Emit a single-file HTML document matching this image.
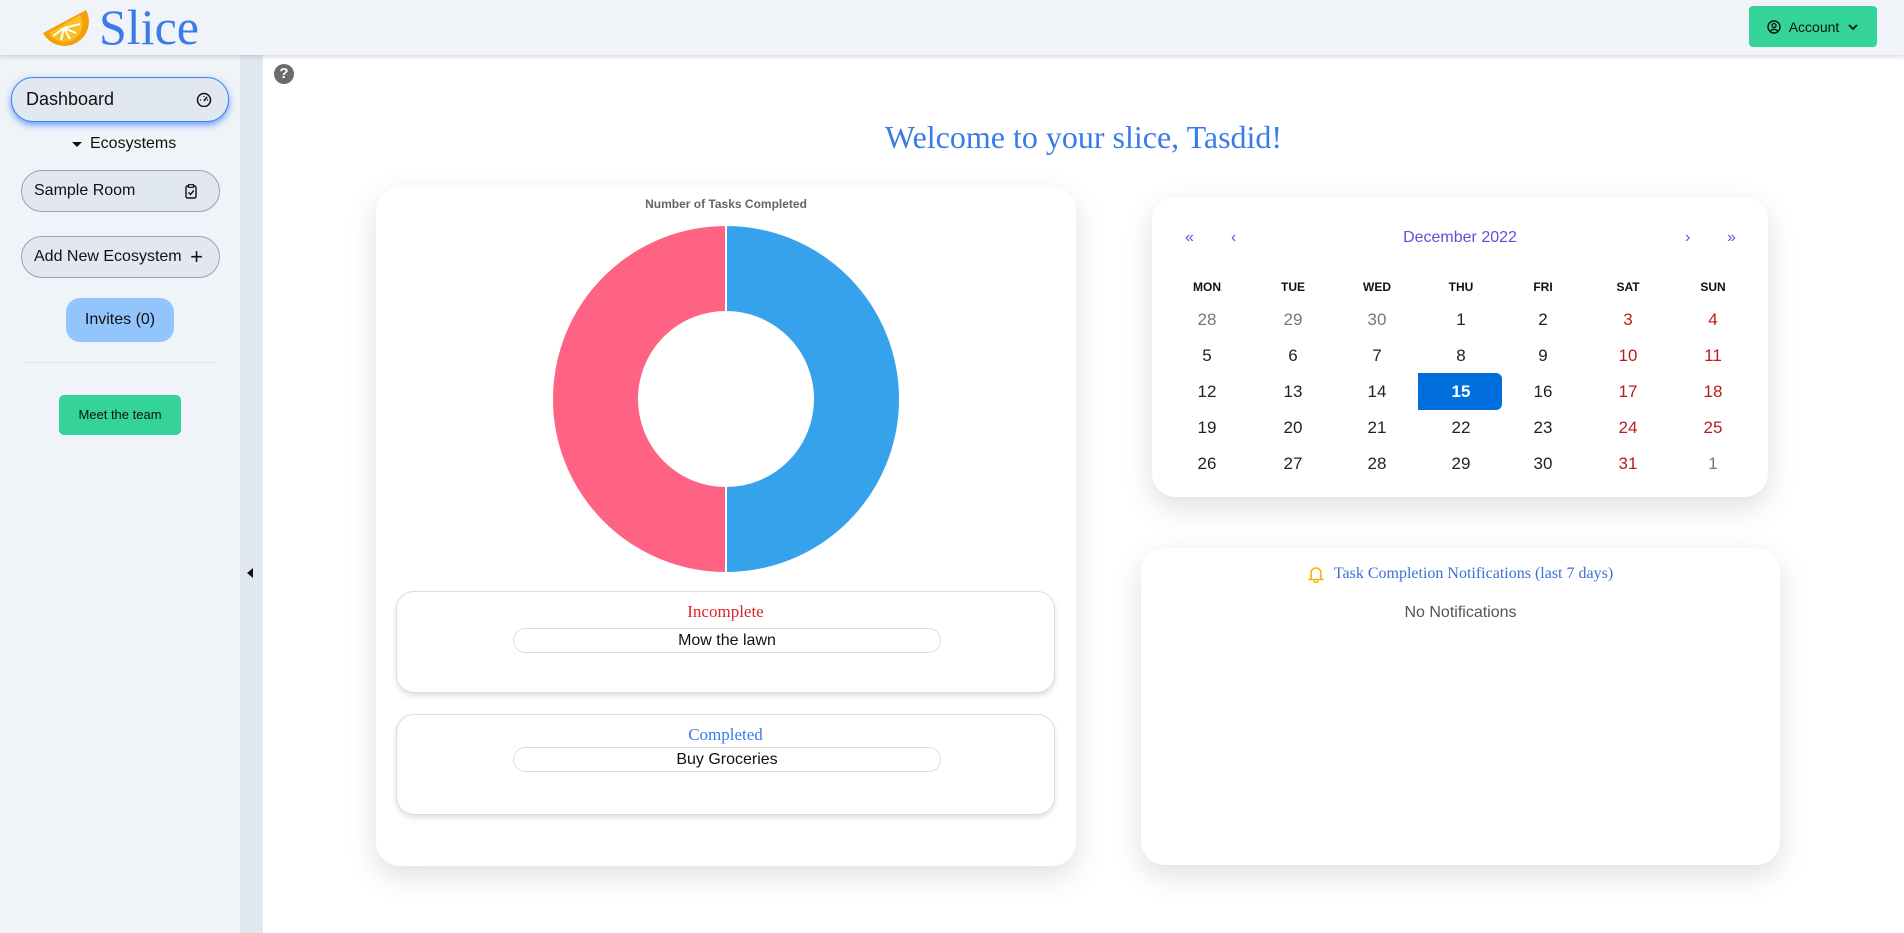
<!DOCTYPE html>
<html><head><meta charset="utf-8"><style>
*{box-sizing:border-box;margin:0;padding:0}
body{width:1904px;height:933px;overflow:hidden;background:#fff;font-family:"Liberation Sans",Arial,sans-serif;position:relative;color:#111}
.abs{position:absolute}
.hdr{left:0;top:0;width:1904px;height:55px;background:#f0f3f8;box-shadow:0 2px 4px rgba(0,0,0,.15);z-index:2}
.serif{font-family:"Liberation Serif",Georgia,serif}
.side{left:0;top:55px;width:240px;height:878px;background:#f0f3f8}
.strip{left:240px;top:55px;width:23px;height:878px;background:#e2e8f0}
.pill{border:1px solid #94a3b8;background:#e2e8f0;border-radius:22px;display:flex;align-items:center;justify-content:space-between;padding:0 14px;font-size:16px;color:#111}
.card{background:#fff;border-radius:24px;box-shadow:0 10px 30px rgba(0,0,0,.13)}
.sub{border-radius:18px;border:1px solid #ddd;background:#fff;box-shadow:0 3px 6px rgba(0,0,0,.12)}
.tp{left:116px;width:428px;height:25px;border:1px solid #ddd;border-radius:13px;text-align:center;font-size:16px;line-height:23px}
.c{position:absolute;width:80px;margin-left:-40px;text-align:center;font-size:17px;color:#222}
.h{font-size:12px;font-weight:bold;color:#111}
.g{color:#777}.r{color:#b91c1c}
</style></head><body>
<div class="abs hdr">
 <svg class="abs" style="left:40px;top:6px" width="50" height="40" viewBox="0 0 50 40"><path d="M3 27 A23 23 0 0 0 46 4 Z" fill="#f59e0b"/><path d="M9 27 A17 17 0 0 0 40 9 Z" fill="#fbbf24"/><path d="M24 22 L13 30 M24 22 L21 34 M24 22 L30 33 M24 22 L36 27 M24 22 L40 18" stroke="#fff" stroke-width="2"/></svg>
 <div class="abs serif" style="left:99px;top:-2px;font-size:50px;color:#3b7be8">Slice</div>
 <div class="abs" style="left:1749px;top:6px;width:128px;height:41px;background:#34d399;border-radius:4px;font-size:14px;display:flex;align-items:center;justify-content:center;gap:8px;color:#111">
  <svg width="14" height="14" viewBox="0 0 14 14"><circle cx="7" cy="7" r="6" fill="none" stroke="#111" stroke-width="1.4"/><circle cx="7" cy="5.5" r="2" fill="none" stroke="#111" stroke-width="1.3"/><path d="M3.5 11 Q7 7.5 10.5 11" fill="none" stroke="#111" stroke-width="1.3"/></svg>Account
  <svg width="12" height="12" viewBox="0 0 12 12"><path d="M2 4 L6 8 L10 4" fill="none" stroke="#111" stroke-width="1.8"/></svg></div>
</div>
<div class="abs side"></div>
<div class="abs strip"></div>
<div class="abs" style="left:247px;top:568px;width:0;height:0;border-top:5px solid transparent;border-bottom:5px solid transparent;border-right:6px solid #111"></div>
<div class="abs pill" style="left:11px;top:77px;width:218px;height:45px;border:1.5px solid #3b82f6;box-shadow:0 3px 7px rgba(59,130,246,.75);padding:0 16px 0 14px;font-size:18px">Dashboard
 <svg width="16" height="15" viewBox="0 0 16 15"><circle cx="8" cy="8" r="6.5" fill="none" stroke="#111" stroke-width="1.5"/><path d="M8 9 L11 5" stroke="#111" stroke-width="1.5"/><path d="M4 8 h1 M8 4 v1 M12 8 h-1" stroke="#111" stroke-width="1.2"/></svg></div>
<div class="abs" style="left:72px;top:135px;font-size:16px;display:flex;align-items:center;gap:8px"><span style="border-left:5px solid transparent;border-right:5px solid transparent;border-top:5px solid #111"></span>Ecosystems</div>
<div class="abs pill" style="left:21px;top:170px;width:199px;height:42px;padding:0 22px 0 12px">Sample Room
 <svg width="12" height="15" viewBox="0 0 12 15"><rect x="1" y="2" width="10" height="12" rx="1.5" fill="none" stroke="#111" stroke-width="1.4"/><rect x="3.5" y="0.7" width="5" height="2.6" fill="#fff" stroke="#111" stroke-width="1.2"/><path d="M3.5 8.5 L5.5 10.5 L8.8 6.5" fill="none" stroke="#111" stroke-width="1.4"/></svg></div>
<div class="abs pill" style="left:21px;top:236px;width:199px;height:42px;padding:0 16px 0 12px">Add New Ecosystem<span style="font-size:22px;font-weight:300">+</span></div>
<div class="abs" style="left:66px;top:298px;width:108px;height:44px;background:#93c5fd;border-radius:14px;font-size:16px;text-align:center;line-height:44px">Invites (0)</div>
<div class="abs" style="left:24px;top:362px;width:192px;height:1px;background:#dde3ea"></div>
<div class="abs" style="left:59px;top:395px;width:122px;height:40px;background:#34d399;border-radius:5px;font-size:13px;text-align:center;line-height:40px">Meet the team</div>
<div class="abs" style="left:274px;top:64px;width:20px;height:20px;border-radius:50%;background:#6b6b6b;color:#fff;font-weight:bold;font-size:15px;text-align:center;line-height:20px">?</div>
<div class="abs serif" style="left:263px;width:1641px;top:119px;text-align:center;font-size:32px;color:#3b7be8">Welcome to your slice, Tasdid!</div>

<div class="abs card" style="left:376px;top:187px;width:700px;height:679px">
 <div class="abs" style="left:0;width:700px;top:10px;text-align:center;font-size:12px;font-weight:bold;color:#666">Number of Tasks Completed</div>
 <svg class="abs" style="left:173px;top:35px" width="354" height="354" viewBox="0 0 354 354">
  <path d="M177 3 A174 174 0 0 1 177 351 L177 264 A87 87 0 0 0 177 90 Z" fill="#36a2eb" stroke="#fff" stroke-width="2"/>
  <path d="M177 351 A174 174 0 0 1 177 3 L177 90 A87 87 0 0 0 177 264 Z" fill="#ff6384" stroke="#fff" stroke-width="2"/>
 </svg>
 <div class="abs sub" style="left:20px;top:404px;width:659px;height:102px">
  <div class="abs serif" style="left:0;width:100%;top:10px;text-align:center;font-size:17px;color:#dc2626">Incomplete</div>
  <div class="abs tp" style="top:36px">Mow the lawn</div></div>
 <div class="abs sub" style="left:20px;top:527px;width:659px;height:101px">
  <div class="abs serif" style="left:0;width:100%;top:10px;text-align:center;font-size:17px;color:#3b7be8">Completed</div>
  <div class="abs tp" style="top:32px">Buy Groceries</div></div>
</div>

<div class="abs card" style="left:1152px;top:197px;width:616px;height:300px">
 <div class="abs" style="left:0;top:32px;width:616px;font-size:16px;color:#6d48d8">
  <span class="abs" style="left:33px">«</span><span class="abs" style="left:79px">‹</span>
  <span class="abs" style="left:0;width:616px;text-align:center">December 2022</span>
  <span class="abs" style="left:533px">›</span><span class="abs" style="left:575px">»</span></div>
</div>
<div class="abs card" style="left:1141px;top:548px;width:639px;height:317px">
 <div class="abs serif" style="left:0;width:639px;top:17px;text-align:center;font-size:16px;color:#3b6fd6;display:flex;justify-content:center;align-items:center;gap:10px">
  <svg width="16" height="18" viewBox="0 0 16 18"><path d="M3 13 V8 A5 5 0 0 1 13 8 V13 L14.5 14.5 H1.5 Z M6 15.5 A2 2 0 0 0 10 15.5" fill="none" stroke="#f5b301" stroke-width="1.6"/></svg>Task Completion Notifications (last 7 days)</div>
 <div class="abs" style="left:0;width:639px;top:56px;text-align:center;font-size:16px;color:#555">No Notifications</div>
</div>
<div class="abs" style="left:1418px;top:373px;width:84px;height:37px;background:#006edc;border-radius:0 6px 6px 0"></div>
<div class="c h" style="left:1207px;top:280px">MON</div><div class="c h" style="left:1293px;top:280px">TUE</div><div class="c h" style="left:1377px;top:280px">WED</div><div class="c h" style="left:1461px;top:280px">THU</div><div class="c h" style="left:1543px;top:280px">FRI</div><div class="c h" style="left:1628px;top:280px">SAT</div><div class="c h" style="left:1713px;top:280px">SUN</div>
<div class="c g" style="left:1207px;top:310px">28</div><div class="c g" style="left:1293px;top:310px">29</div><div class="c g" style="left:1377px;top:310px">30</div><div class="c" style="left:1461px;top:310px">1</div><div class="c" style="left:1543px;top:310px">2</div><div class="c r" style="left:1628px;top:310px">3</div><div class="c r" style="left:1713px;top:310px">4</div>
<div class="c" style="left:1207px;top:346px">5</div><div class="c" style="left:1293px;top:346px">6</div><div class="c" style="left:1377px;top:346px">7</div><div class="c" style="left:1461px;top:346px">8</div><div class="c" style="left:1543px;top:346px">9</div><div class="c r" style="left:1628px;top:346px">10</div><div class="c r" style="left:1713px;top:346px">11</div>
<div class="c" style="left:1207px;top:382px">12</div><div class="c" style="left:1293px;top:382px">13</div><div class="c" style="left:1377px;top:382px">14</div><div class="c" style="left:1461px;top:382px;color:#fff;font-weight:bold">15</div><div class="c" style="left:1543px;top:382px">16</div><div class="c r" style="left:1628px;top:382px">17</div><div class="c r" style="left:1713px;top:382px">18</div>
<div class="c" style="left:1207px;top:418px">19</div><div class="c" style="left:1293px;top:418px">20</div><div class="c" style="left:1377px;top:418px">21</div><div class="c" style="left:1461px;top:418px">22</div><div class="c" style="left:1543px;top:418px">23</div><div class="c r" style="left:1628px;top:418px">24</div><div class="c r" style="left:1713px;top:418px">25</div>
<div class="c" style="left:1207px;top:454px">26</div><div class="c" style="left:1293px;top:454px">27</div><div class="c" style="left:1377px;top:454px">28</div><div class="c" style="left:1461px;top:454px">29</div><div class="c" style="left:1543px;top:454px">30</div><div class="c r" style="left:1628px;top:454px">31</div><div class="c g" style="left:1713px;top:454px">1</div>
</body></html>
